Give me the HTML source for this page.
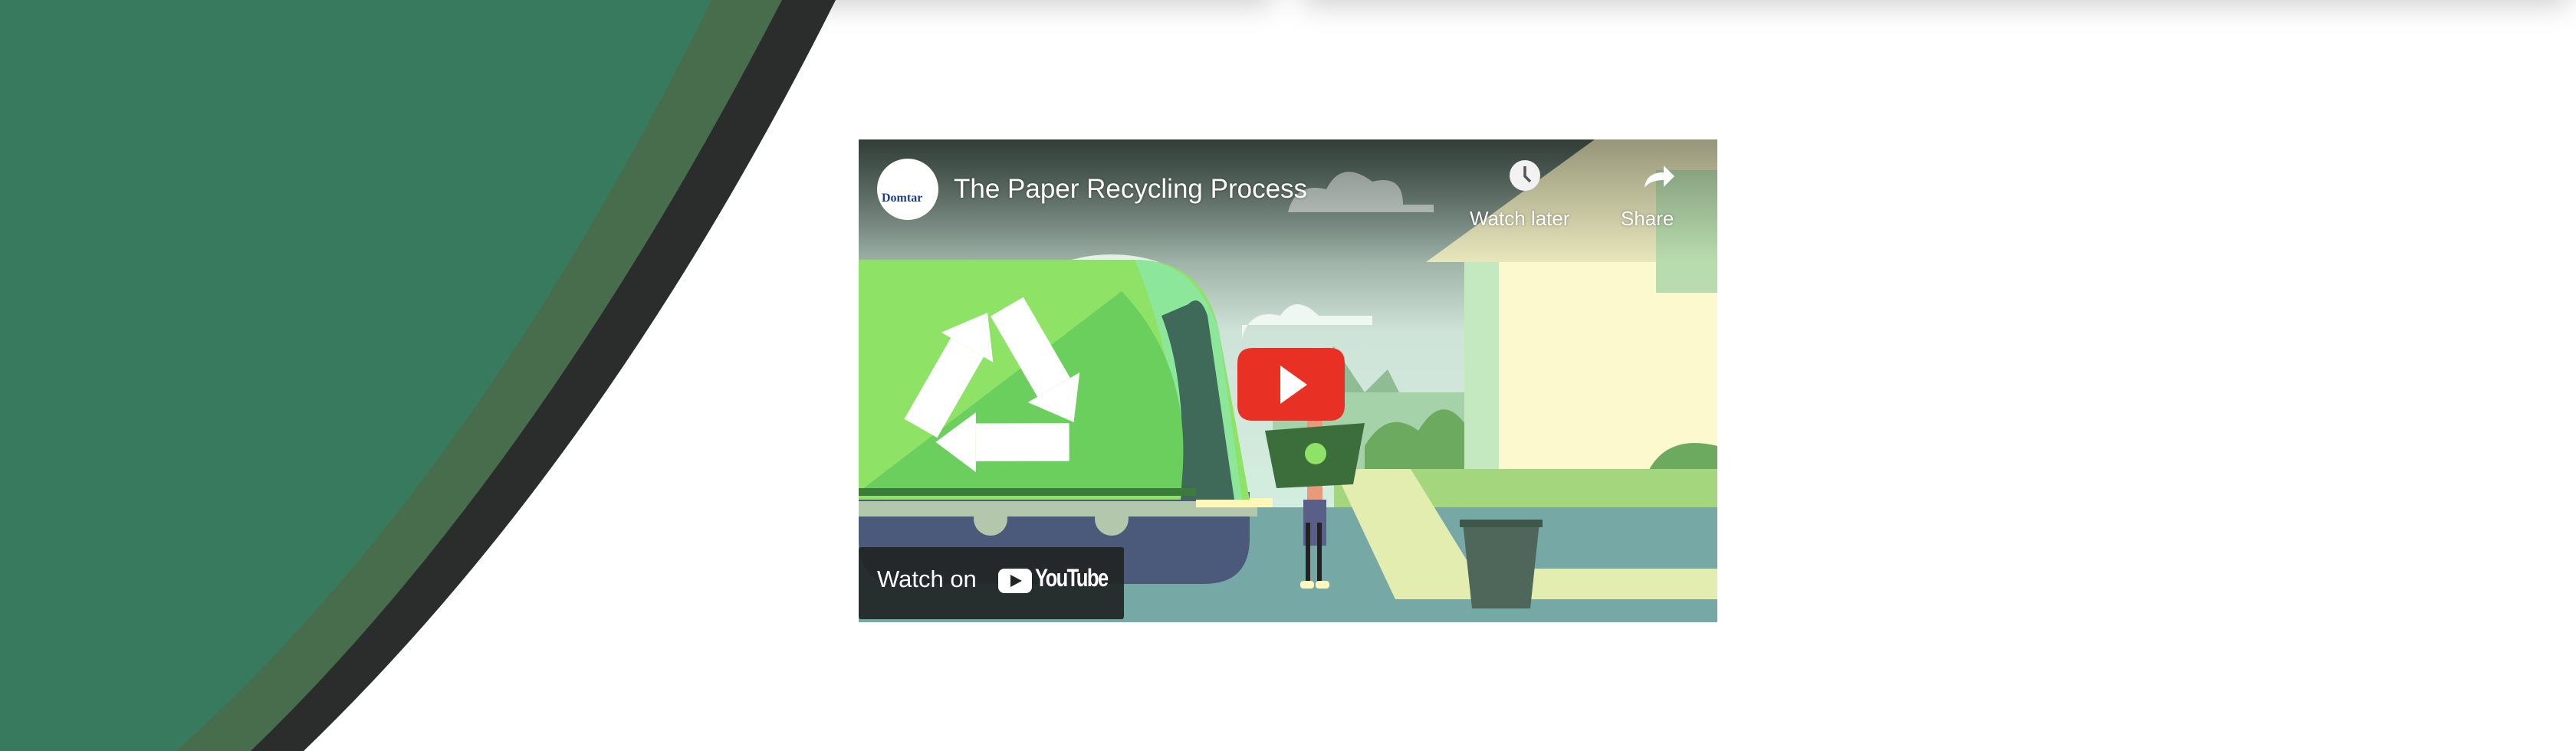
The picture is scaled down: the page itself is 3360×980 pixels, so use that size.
<!DOCTYPE html>
<html><head><meta charset="utf-8"><style>
html,body{margin:0;padding:0;width:3360px;height:980px;overflow:hidden;background:#fff;font-family:"Liberation Sans",sans-serif}
.sh{position:absolute;top:-60px;height:60px;background:#fff;box-shadow:0 4px 40px rgba(0,0,0,.22)}
#v{position:absolute;left:1120px;top:182px;width:1120px;height:630px;overflow:hidden}
.t{position:absolute;color:#fff;white-space:nowrap}
</style></head><body>
<div class="sh" style="left:940px;width:720px"></div>
<div class="sh" style="left:1700px;width:1650px"></div>
<svg style="position:absolute;left:0;top:0" width="1200" height="980">
<path d="M0 0 H1090 Q790 600 396 980 H0 Z" fill="#2b2d2c"/>
<path d="M0 0 H1020 Q700 620 327 980 H0 Z" fill="#476d4c"/>
<path d="M0 0 H928 Q620 630 230 980 H0 Z" fill="#377a5e"/>
</svg>
<div id="v">
<svg width="1120" height="630" viewBox="0 0 1120 630">
<defs>
<linearGradient id="sky" x1="0" y1="0" x2="0" y2="1"><stop offset="0" stop-color="#4b5f55"/><stop offset=".4" stop-color="#cfe3d8"/><stop offset="1" stop-color="#d5f5e3"/></linearGradient>
<linearGradient id="top" x1="0" y1="0" x2="0" y2="1"><stop offset="0" stop-color="#000" stop-opacity=".35"/><stop offset="1" stop-color="#000" stop-opacity="0"/></linearGradient>
</defs>
<rect width="1120" height="630" fill="url(#sky)"/>
<path d="M560 95 q10-40 50-30 q20-40 60 -10 q40 -10 40 30 h40 v10 h-190z" fill="#c9d3cd"/>
<ellipse cx="330" cy="220" rx="120" ry="70" fill="#e9f3ee"/>
<path d="M500 260 q10-40 50-30 q20-30 50 0 h70 v12 h-170z" fill="#eef7f2"/>
<polygon points="540,360 590,300 620,270 660,330 690,300 720,360" fill="#8fbc92"/>
<rect x="540" y="330" width="260" height="100" fill="#a5d2a8"/>
<polygon points="740,160 960,0 1120,0 1120,160" fill="#e7e6bb"/>
<rect x="790" y="160" width="330" height="330" fill="#fbf9cd"/>
<rect x="790" y="160" width="45" height="330" fill="#c4e8c0"/>
<rect x="1040" y="40" width="80" height="160" fill="#b9dcae"/>
<path d="M660 400 q30-50 70-20 q30-50 60 -10 v120 h-130z" fill="#6caa5f"/>
<path d="M960 500 q20-60 60-40 q20-80 100-60 v100z" fill="#6caa5f"/>
<rect x="620" y="430" width="500" height="80" fill="#a4d77d"/>
<rect x="0" y="480" width="1120" height="150" fill="#76a8a6"/>
<polygon points="620,430 720,430 800,560 1120,560 1120,600 700,600" fill="#e3edb0"/>
<path d="M0 460 h510 v60 q0 60-60 60 h-400 q-50 0-50-60z" fill="#4b5a7a"/>
<rect x="0" y="472" width="520" height="20" fill="#b3c7ad"/>
<rect x="440" y="468" width="100" height="12" fill="#fdf7b8"/>
<circle cx="172" cy="495" r="22" fill="#b3c7ad"/><circle cx="330" cy="495" r="22" fill="#b3c7ad"/>
<path d="M0 157 H360 Q450 157 470 250 L510 470 H0 Z" fill="#8ee266"/>
<path d="M360 157 Q440 157 470 250 L500 470 H420 Q420 300 360 157Z" fill="#8de79a"/>
<path d="M455 230 Q445 200 430 215 L395 230 Q430 320 420 470 H490 Z" fill="#3f6a5a"/>
<path d="M343 198 L0 460 H420 Q440 300 343 198Z" fill="#6bcf5d"/>
<rect x="0" y="455" width="440" height="10" fill="#3c7c3a"/>
<g fill="#fff" transform="translate(183 330) scale(1.3)">
<g id="ar"><line x1="8" y1="-86" x2="55" y2="-5" stroke="#fff" stroke-width="38"/><polygon points="29,10 81,-20 75,30"/></g>
<use href="#ar" transform="rotate(120)"/>
<use href="#ar" transform="rotate(240)"/>
</g>
<rect x="585" y="360" width="20" height="120" fill="#e79b7a"/>
<polygon points="530,380 660,370 645,450 545,455" fill="#3b6e3a"/>
<circle cx="596" cy="410" r="14" fill="#8ee266"/>
<rect x="580" y="470" width="30" height="60" fill="#5a5f8a"/>
<rect x="583" y="500" width="6" height="80" fill="#222"/><rect x="598" y="500" width="6" height="80" fill="#222"/>
<rect x="576" y="576" width="18" height="10" rx="4" fill="#fdf7c0"/><rect x="596" y="576" width="18" height="10" rx="4" fill="#fdf7c0"/>
<polygon points="788,500 888,500 876,612 800,612" fill="#4f665b"/>
<rect x="784" y="496" width="108" height="10" fill="#3f564b"/>
<rect width="1120" height="160" fill="url(#top)"/>
<path d="M514 272 h100 q20 0 20 20 v55 q0 20-20 20 h-100 q-20 0-20-20 v-55 q0-20 20-20z" fill="#e93024"/>
<polygon points="550,295 585,320 550,345" fill="#fff"/>
<circle cx="64" cy="65" r="40" fill="#fff"/>
<circle cx="869" cy="47" r="20" fill="#f2f2f2"/>
<path d="M869 35 v13 l7 7" stroke="#555" stroke-width="3.5" fill="none"/>
<path d="M1025 63 q2-20 25-20 v-9 l14 14 -14 14 v-9 q-18 0-25 10z" fill="#fff"/>
<rect x="0" y="532" width="346" height="94" rx="3" fill="#212424" fill-opacity=".92"/>
<rect x="182" y="560" width="44" height="32" rx="8" fill="#fff"/>
<polygon points="198,568 213,576 198,584" fill="#212424"/>
</svg>
<div class="t" style="left:30px;top:68px;font-family:'Liberation Serif',serif;font-size:16px;font-weight:bold;color:#1b3f8b">Domtar</div>
<div class="t" style="left:124px;top:45px;font-size:35px;text-shadow:0 0 3px rgba(0,0,0,.4)">The Paper Recycling Process</div>
<div class="t" style="left:797px;top:88px;font-size:26px;text-shadow:0 0 3px rgba(0,0,0,.4)">Watch later</div>
<div class="t" style="left:994px;top:88px;font-size:26px;text-shadow:0 0 3px rgba(0,0,0,.4)">Share</div>
<div class="t" style="left:24px;top:556px;font-size:31px">Watch on</div>
<div class="t" style="left:230px;top:554px;font-size:32px;font-weight:bold;letter-spacing:-2px;transform:scaleX(.8);transform-origin:left">YouTube</div>
</div>
</body></html>
